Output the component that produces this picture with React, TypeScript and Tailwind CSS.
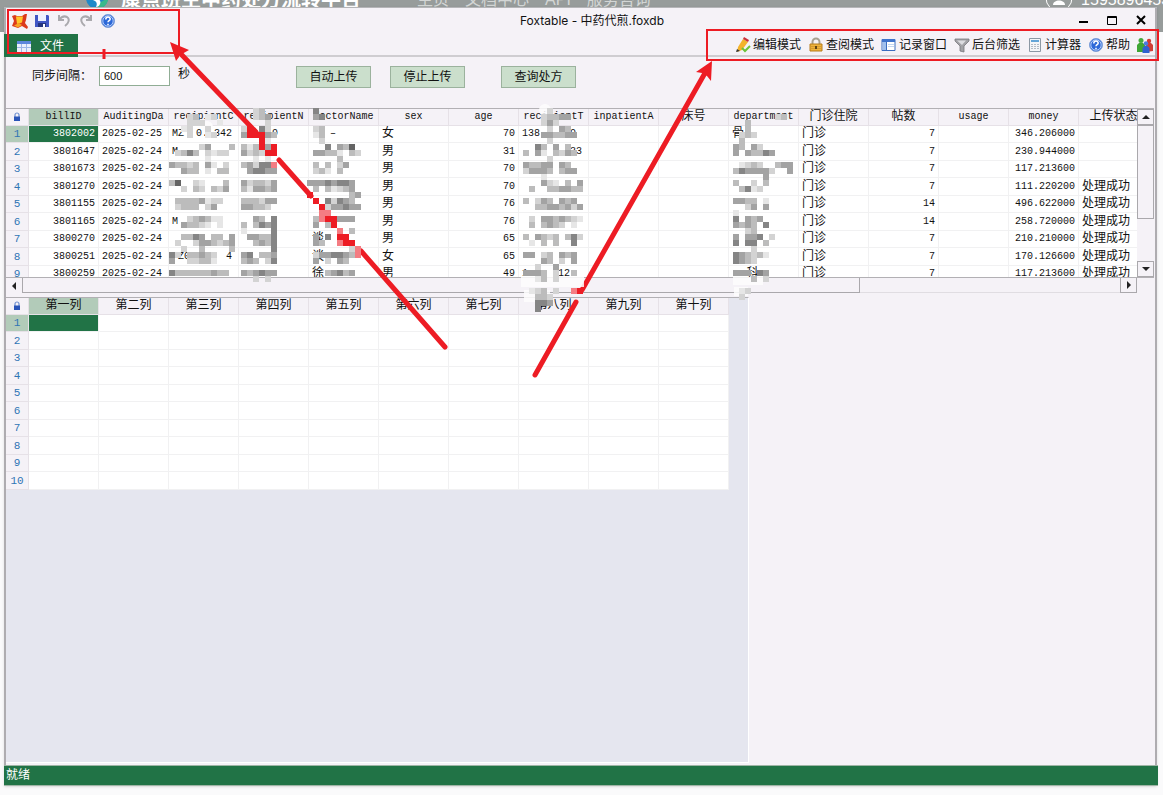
import { useState } from 'react';
import type { ReactNode } from 'react';

type Align = 'left' | 'right';

interface Column {
  key: string;
  title: string;
  align: Align;
}

const columns: Column[] = [
  { key: 'bill', title: 'billID', align: 'right' },
  { key: 'date', title: 'AuditingDa', align: 'left' },
  { key: 'code', title: 'recipientC', align: 'left' },
  { key: 'name', title: 'recipientN', align: 'left' },
  { key: 'doctor', title: 'doctorName', align: 'left' },
  { key: 'sex', title: 'sex', align: 'left' },
  { key: 'age', title: 'age', align: 'right' },
  { key: 'tel', title: 'recipientT', align: 'left' },
  { key: 'inpatient', title: 'inpatientA', align: 'left' },
  { key: 'bed', title: '床号', align: 'left' },
  { key: 'dept', title: 'department', align: 'left' },
  { key: 'kind', title: '门诊住院', align: 'left' },
  { key: 'doses', title: '帖数', align: 'right' },
  { key: 'usage', title: 'usage', align: 'right' },
  { key: 'money', title: 'money', align: 'right' },
  { key: 'status', title: '上传状态', align: 'left' },
];

const bills: Record<string, string>[] = [
  { bill: '3802002', date: '2025-02-25', code: 'MZ  0. 342', name: '     9', doctor: '   –', sex: '女', age: '70', tel: '138    60', dept: '骨', doses: '7', money: '346.206000' },
  { bill: '3801647', date: '2025-02-24', code: 'M', sex: '男', age: '31', tel: '        33', doses: '7', money: '230.944000' },
  { bill: '3801673', date: '2025-02-24', sex: '男', age: '70', doses: '7', money: '117.213600' },
  { bill: '3801270', date: '2025-02-24', sex: '男', age: '70', doses: '7', money: '111.220200', status: '处理成功' },
  { bill: '3801155', date: '2025-02-24', sex: '男', age: '76', doses: '14', money: '496.622000', status: '处理成功' },
  { bill: '3801165', date: '2025-02-24', code: 'M', sex: '男', age: '76', doses: '14', money: '258.720000', status: '处理成功' },
  { bill: '3800270', date: '2025-02-24', doctor: '谈', sex: '男', age: '65', doses: '7', money: '210.210000', status: '处理成功' },
  { bill: '3800251', date: '2025-02-24', code: ' Z0   0  4', doctor: '谈', sex: '女', age: '65', doses: '7', money: '170.126600', status: '处理成功' },
  { bill: '3800259', date: '2025-02-24', doctor: '徐', sex: '男', age: '49', tel: '1     12', dept: '  科', doses: '7', money: '117.213600', status: '处理成功' },
];

const blankTitles = ['第一列', '第二列', '第三列', '第四列', '第五列', '第六列', '第七列', '第八列', '第九列', '第十列'];

const CELL = 6;
const TOP = 108;

const shades: Record<string, string> = {
  '1': '#e6e6e6',
  '2': '#d3d3d3',
  '3': '#bcbcbc',
  '4': '#a3a3a3',
  '5': '#858585',
  '6': '#636363',
  r: '#ed1c24',
  p: '#f47c82',
};

// Each block: left edge, first row, then one string per 6px row
const blocks: { x: number; row: number; rows: string[] }[] = [
  {
    x: 169,
    row: 1,
    rows: [
      '...23.12', '...222..1', '..12..2', '...2..12', '', '.....24...3', '.2353.2122', '......1', '43323.41.2', '..433.1.33', '',
      '36..21...3', '..2.32.324', '', '.33334122', '.2333.24', '', '...234311', '..43321.1', '', '..3354.33.4', '.2..2443234',
      '..2..3....3', '52.33432', '4..22331', '', '5333333433',
    ],
  },
  {
    x: 241,
    row: 0,
    rows: [
      '..23', '..234', '....2', '2r.52', '4rrr43', '...r1', '313r4r', '4232rr', '..1.1', '34255p', '.45544', '', '423324', '314434', '',
      '333244', '44332', '', '..43.5', '3.3545', '1....5', '.44335', '..3435', '.....5', '45.334', '343.25', '', '434544', '..2.2',
    ],
  },
  {
    x: 307,
    row: 0,
    rows: [
      '.5', '.45', '', '.23', '.13', '..2', '...5.436', '.44331.32', '.....3', '.3.3.24', '.231.3', '', '44454554', '.3.31234',
      'r......34', '.r.52543', '..r244544', '..pp', '.3prr444', '.4.3r', '.....p.3', '.4.5.rr', '.43..prr', '.......2p', '.2445543p',
      '.4.2.43', '', '...34534',
    ],
  },
  {
    x: 523,
    row: 0,
    rows: [
      '....2', '...23344', '...242', '....2.43', '...443344', '....2', '..53.4.3', '3.41.3243', '....2', '43344.43', '24443.344', '...1',
      '...421.3.4', '.3..334433', '', '3.243.434', '..33443424', '', '.2.4434321', '.3.3432.1', '', '3.4323.352', '.1.3.3..5', '',
      '44.23.434', '...43.2.4', '..2..4', '4443.2..3', '..13.2', '', '.123.2..pr', '..332....', '..554', '..5',
    ],
  },
  {
    x: 733,
    row: 1,
    rows: [
      '.......23', '..3', '..3', '.232', '.3', '43.42', '4.43354', '', '.1232..344', '3544442..4', '.....4', '3..2.3', '.3512', '',
      '4433.1', '..24.4', '1', '5.434', '4343.5', '..23', '4.445.2', '5.55.3', '...2', '543231', '5432', '', '444.54', '...3.2', '',
      '.12', '.2',
    ],
  },
];

function Svg({ children }: { children: ReactNode }) {
  return (
    <svg className="h-4 w-4 shrink-0" viewBox="0 0 16 16" aria-hidden="true">
      {children}
    </svg>
  );
}

function FoxIcon() {
  return (
    <Svg>
      <path d="M0 3l3-1 2 1 5 0 3-2 2 0-1 6-1 3 3 4-1 2-5-3-4 2-6-2 2-5z" fill="#dc3a1c" />
      <path d="M4 3.500l7 0-1 6-5 1.500z" fill="#ffc62a" />
      <path d="M2 12.500l5-2.500 3 2-4 2.500z" fill="#f7a422" />
    </Svg>
  );
}

function SaveIcon() {
  return (
    <Svg>
      <path d="M1 2h13l1 1v11H1z" fill="#4257c4" />
      <path d="M4 2h8v6H4z" fill="#eef2ff" />
      <path d="M4 10h8v4H4z" fill="#26347e" />
      <path d="M9 11h2v3H9z" fill="#fff" />
    </Svg>
  );
}

function UndoIcon({ flip }: { flip?: boolean }) {
  return (
    <Svg>
      <g transform={flip ? 'translate(16 0) scale(-1 1)' : undefined} fill="none" stroke="#aaa9ad" strokeWidth="2">
        <path d="M3 2v5h5M3 7c3-4 6-4 8-3 3 2 2 6-2 9" />
      </g>
    </Svg>
  );
}

function HelpIcon() {
  return (
    <Svg>
      <circle cx="8" cy="8" r="6.500" fill="#2c68d8" stroke="#7f9fd8" />
      <circle cx="8" cy="8" r="5.200" fill="none" stroke="#d6e4ff" strokeWidth=".8" />
      <path d="M5.800 6.400c0-3 4.400-3 4.400-.3 0 1.600-2.200 1.600-2.200 3.200M8 10.700v1.500" fill="none" stroke="#fff" strokeWidth="1.500" />
    </Svg>
  );
}

function PencilIcon() {
  return (
    <Svg>
      <path d="M8 2l5 3-6 8-5 2 1-5z" fill="#f3b32c" />
      <path d="M8 2l1-2 5 3-1 2z" fill="#c9303c" />
      <path d="M1 15l1-3 3 2z" fill="#333" />
      <path d="M7 11l3 3 5-5" fill="none" stroke="#6cc33a" strokeWidth="2" />
    </Svg>
  );
}

function PadlockIcon() {
  return (
    <Svg>
      <path d="M4.500 8V5a3.500 3.500 0 0 1 7 0v3" fill="none" stroke="#a8a090" strokeWidth="2" />
      <path d="M2 7h12v7H2z" fill="#eeb33b" stroke="#b67d1c" />
      <path d="M3 9.500h10M3 11.500h10" stroke="#d59a30" />
      <path d="M7 9h2v3H7z" fill="#5f4313" />
    </Svg>
  );
}

function RecordIcon() {
  return (
    <Svg>
      <path d="M1 2.500h13v11H1z" fill="#fff" stroke="#3b6dbf" />
      <path d="M1 2h13v3H1z" fill="#3f74cc" />
      <path d="M2 5h3v8H2z" fill="#9fc0ee" />
      <path d="M5.500 5v8" stroke="#3b6dbf" />
      <path d="M7 7.500h6M7 9.500h6" stroke="#c3d6f2" />
    </Svg>
  );
}

function FunnelIcon() {
  return (
    <Svg>
      <path d="M1 2h14v2l-5 5v6l-4-1V9L1 4z" fill="#a2a2a6" stroke="#77777c" strokeWidth=".8" />
      <path d="M3 3.500h9L8 8z" fill="#dcdce0" />
    </Svg>
  );
}

function CalcIcon() {
  return (
    <Svg>
      <path d="M2.500 1.500h11v13h-11z" fill="#f4f6f8" stroke="#8c98a4" />
      <path d="M4 3h8v2H4z" fill="#64a6d8" />
      <path d="M4 7.500h8M4 9.500h8M4 11.500h8" stroke="#b3bcc6" strokeDasharray="2 1" />
    </Svg>
  );
}

function PeopleIcon() {
  return (
    <Svg>
      <circle cx="4" cy="3.500" r="2.500" fill="#46a83c" />
      <path d="M0 15V8l2-2h4l2 2v7z" fill="#3fa535" />
      <circle cx="12" cy="4" r="2.200" fill="#d23a32" />
      <path d="M9 15V8l2-2h3l2 2v6z" fill="#cf3f36" />
      <circle cx="9" cy="6.500" r="2.200" fill="#4a7be0" />
      <path d="M5.500 16v-5l2-2h3l2 2v5z" fill="#2f62d0" />
    </Svg>
  );
}

function TableIcon() {
  return (
    <Svg>
      <path d="M1 3h14v11H1z" fill="#e9effc" />
      <path d="M1 3h14v3H1z" fill="#5b86dc" />
      <path d="M1 9.500h14M5.500 6v8M10.500 6v8" stroke="#9cb6e8" />
    </Svg>
  );
}

function RowLock() {
  return (
    <svg className="mx-auto block h-[10px] w-2" viewBox="0 0 8 10" aria-hidden="true">
      <path d="M2 5V3a2 2 0 0 1 4 0v2" fill="none" stroke="#6f8fd0" strokeWidth="1.200" />
      <path d="M1 4.500h6V9H1z" fill="#2a54b8" />
    </svg>
  );
}

const menuItems = [
  { label: '编辑模式', icon: <PencilIcon /> },
  { label: '查阅模式', icon: <PadlockIcon /> },
  { label: '记录窗口', icon: <RecordIcon /> },
  { label: '后台筛选', icon: <FunnelIcon /> },
  { label: '计算器', icon: <CalcIcon /> },
  { label: '帮助', icon: <HelpIcon /> },
];

const isLatin = (text: string) => /^[\x20-\x7e–]*$/.test(text);

function GridHead({ titles }: { titles: string[] }) {
  return (
    <>
      <colgroup>
        <col className="w-[23px]" />
        {titles.map((t) => (
          <col key={t} className="w-[70px]" />
        ))}
      </colgroup>
      <thead>
        <tr className="h-[17px]">
          <th className="border-r border-b border-[#e6e1e7] bg-[#f5f2f7] p-0">
            <RowLock />
          </th>
          {titles.map((t, i) => (
            <th
              key={t}
              className={`overflow-hidden border-r border-b border-[#e6e1e7] p-0 text-center font-normal leading-4 ${
                i === 0 ? 'bg-[#b2cbb9]' : 'bg-[#f5f2f7]'
              } ${isLatin(t) ? 'text-[10px]' : 'text-xs'}`}
            >
              {t}
            </th>
          ))}
        </tr>
      </thead>
    </>
  );
}

function RowNumber({ n }: { n: number }) {
  return (
    <th
      className={`border-r border-b border-[#e6e1e7] p-0 text-center text-[11px] font-normal leading-4 text-[#2f75b5] ${
        n === 1 ? 'bg-[#b2cbb9]' : 'bg-[#f5f2f7]'
      }`}
    >
      {n}
    </th>
  );
}

function BillGrid() {
  return (
    <table className="w-[1143px] table-fixed border-separate border-spacing-0 whitespace-pre">
      <GridHead titles={columns.map((c) => c.title)} />
      <tbody>
        {bills.map((bill, r) => (
          <tr key={bill.bill} className="odd:h-[17px] even:h-[18px]">
            <RowNumber n={r + 1} />
            {columns.map((c, i) => {
              const text = c.key === 'kind' ? '门诊' : bill[c.key] ?? '';
              return (
                <td
                  key={c.key}
                  className={`overflow-hidden border-r border-b border-[#f1f1f2] px-[3px] py-0 leading-4 ${
                    c.align === 'right' ? 'text-right' : 'text-left'
                  } ${isLatin(text) ? 'text-[10px]' : 'text-xs'} ${r === 0 && i === 0 ? 'bg-[#217346] text-white' : 'bg-white'}`}
                >
                  {text}
                </td>
              );
            })}
          </tr>
        ))}
      </tbody>
    </table>
  );
}

function BlankGrid() {
  return (
    <table className="w-[723px] table-fixed border-separate border-spacing-0">
      <GridHead titles={blankTitles} />
      <tbody>
        {Array.from({ length: 10 }, (_, r) => (
          <tr key={r} className="odd:h-[17px] even:h-[18px]">
            <RowNumber n={r + 1} />
            {blankTitles.map((t, i) => (
              <td
                key={t}
                className={`border-r border-b border-[#f1f1f2] p-0 ${r === 0 && i === 0 ? 'bg-[#217346]' : 'bg-white'}`}
              />
            ))}
          </tr>
        ))}
      </tbody>
    </table>
  );
}

function ScrollArrow({ label, d, className }: { label: string; d: string; className: string }) {
  return (
    <button type="button" aria-label={label} className={`flex shrink-0 items-center justify-center border border-[#aaa8ac] ${className}`}>
      <svg className="h-2 w-2" viewBox="0 0 8 8" aria-hidden="true">
        <path d={d} fill="#222" />
      </svg>
    </button>
  );
}

function Markup() {
  return (
    <svg className="pointer-events-none absolute top-0 left-0" width="1163" height="795" viewBox="0 0 1163 795" aria-hidden="true">
      <g fill="none" stroke="#ed1c24">
        <path d="M8 10h171v43H8zM707 30h451v30H707z" strokeWidth="2" />
        <path d="M104 49v10" strokeWidth="3" />
        <g strokeWidth="5" strokeLinecap="round">
          <path d="M180 53L256 132M279 160L311 196M361 251L445 347" />
          <path d="M705 73L582 290M576 302L535 375" />
        </g>
      </g>
      <path d="M170 42l19 8-7 4-3 1 0 2-3 4zM712 61l-16 11 6 1 5 3 4 5z" fill="#ed1c24" />
      {/* Faded patches around the masked columns */}
      <g fill="#fdfdfd" opacity=".85">
        <circle cx="207" cy="127" r="6" />
        <circle cx="545" cy="110" r="6" />
        <path d="M521 277h63v10h-63zM524 290h26v12h-26zM733 277h30v8h-30zM734 287h14v9h-14z" />
      </g>
      <g shapeRendering="crispEdges">
        {blocks.map((b) =>
          b.rows.map((line, r) =>
            line.split('').map((c, i) =>
              shades[c] ? (
                <rect
                  key={`${b.x}-${r}-${i}`}
                  x={b.x + i * CELL}
                  y={TOP + (b.row + r) * CELL}
                  width={CELL}
                  height={CELL}
                  fill={shades[c]}
                />
              ) : null,
            ),
          ),
        )}
      </g>
    </svg>
  );
}

export default function App() {
  const [interval, setSyncInterval] = useState('600');

  return (
    <div className="relative flex h-screen min-h-[600px] flex-col overflow-hidden bg-[#fafafb] font-['Liberation_Sans','Noto_Sans_CJK_SC',sans-serif] text-xs text-[#111]">
      {/* Site header behind the window */}
      <div className="absolute inset-x-0 top-0 h-8 overflow-hidden bg-[#979c9b] text-white">
        <div className="-mt-[14px] flex h-7 items-center whitespace-nowrap">
          <svg className="ml-[85px] h-6 w-6" viewBox="0 0 24 24" aria-hidden="true">
            <circle cx="12" cy="10" r="11" fill="#2089c9" />
            <path d="M12 21a11 11 0 0 0 11-13c-3 6-9 4-11 13z" fill="#3ab88b" />
            <path d="M8 12c4-3 9 0 7 4-1 3-4 3-4 3 2-4 0-6-3-7z" fill="#fff" />
          </svg>
          <span className="ml-3 text-xl font-bold">康点班主中药处方流转平台</span>
          <nav className="ml-14 flex flex-1 gap-4 text-base text-[#d3d6d5]">
            <span>主页</span>
            <span>文档中心</span>
            <span>API</span>
            <span>服务咨询</span>
          </nav>
          <svg className="mr-2 h-7 w-7" viewBox="0 0 28 28" aria-hidden="true">
            <circle cx="14" cy="12" r="13" fill="none" stroke="#fff" />
            <path d="M8 19c0-6 12-6 12 0z" fill="#fff" />
          </svg>
          <span className="-mr-4 text-base">15958964535</span>
        </div>
      </div>

      <div className="relative mt-[7px] mr-[6px] mb-[9px] ml-1 flex min-h-0 flex-1 flex-col border-t border-[#b5b5b8] bg-[#f5f2f7] shadow-sm">
        <div className="flex min-h-0 flex-1 flex-col border-x-2 border-[#aeacb0]">
          {/* Title bar */}
          <header className="flex h-[26px] shrink-0 items-center">
            <div className="flex gap-[6px] pl-[6px]">
              <button type="button" aria-label="Foxtable"><FoxIcon /></button>
              <button type="button" aria-label="保存"><SaveIcon /></button>
              <button type="button" aria-label="撤销"><UndoIcon /></button>
              <button type="button" aria-label="重做"><UndoIcon flip /></button>
              <button type="button" aria-label="帮助"><HelpIcon /></button>
            </div>
            <h1 className="flex-1 text-center font-['Inter','Noto_Sans_CJK_SC',sans-serif] text-xs">Foxtable - 中药代煎.foxdb</h1>
            <div className="flex">
              <button type="button" aria-label="最小化" className="flex w-[29px] justify-center">
                <Svg><path d="M4 9h9" stroke="#000" strokeWidth="2" /></Svg>
              </button>
              <button type="button" aria-label="最大化" className="flex w-[29px] justify-center">
                <Svg><path d="M3.500 3.500h9v8h-9zM3 4.500h10" fill="none" stroke="#000" /></Svg>
              </button>
              <button type="button" aria-label="关闭" className="flex w-[29px] justify-center">
                <Svg><path d="M4 3l8 8M12 3l-8 8" stroke="#000" strokeWidth="2" /></Svg>
              </button>
            </div>
          </header>

          {/* Ribbon tabs */}
          <div className="flex h-[23px] shrink-0 items-stretch justify-between border-b-2 border-[#cfcdd1]">
            <button type="button" className="-mb-[2px] -ml-[2px] flex items-center gap-2 bg-[#217346] pr-[14px] pl-3 text-white">
              <TableIcon />
              文件
            </button>
            <div className="flex items-center gap-[7px] pr-[2px]">
              {menuItems.map((item) => (
                <button key={item.label} type="button" className="flex items-center gap-[2px] whitespace-nowrap">
                  {item.icon}
                  {item.label}
                </button>
              ))}
              <button type="button" aria-label="用户"><PeopleIcon /></button>
            </div>
          </div>

          {/* Sync controls */}
          <form className="flex h-[51px] shrink-0 items-start pt-[9px] pl-[26px]" onSubmit={(e) => e.preventDefault()}>
            <label htmlFor="interval" className="w-[67px] leading-5">同步间隔：</label>
            <input
              id="interval"
              className="h-5 w-[71px] border border-[#90ad95] bg-white px-1 text-[11px]"
              value={interval}
              onChange={(e) => setSyncInterval(e.target.value)}
            />
            <span className="ml-2 leading-4">秒</span>
            <div className="ml-[106px] flex gap-[19px]">
              <button type="button" className="h-[22px] w-[75px] border border-[#9bb29d] bg-[#cbdfcc] leading-5">自动上传</button>
              <button type="button" className="h-[22px] w-[75px] border border-[#9bb29d] bg-[#cbdfcc] leading-5">停止上传</button>
            </div>
            <button type="button" className="ml-9 h-[22px] w-[75px] border border-[#9bb29d] bg-[#cbdfcc] leading-5">查询处方</button>
          </form>

          <main className="flex min-h-0 flex-1 flex-col font-['Liberation_Mono','Noto_Sans_CJK_SC',monospace]">
            <section className="mr-px flex h-[170px] shrink-0 border-y border-[#b2b0b4]">
              <div className="min-w-0 flex-1 overflow-hidden bg-white">
                <BillGrid />
              </div>
              <div className="flex w-[17px] shrink-0 flex-col">
                <ScrollArrow label="向上" d="M4 2l4 4H0z" className="h-4 w-full" />
                <div className="h-[94px] border border-[#aaa8ac]" />
                <div className="flex-1" />
                <ScrollArrow label="向下" d="M4 6L0 2h8z" className="h-4 w-full" />
              </div>
            </section>
            <div className="mr-[18px] flex h-[15px] shrink-0">
              <ScrollArrow label="向左" d="M2 4l4-4v8z" className="w-[17px] border-y-0 border-l-0" />
              <div className="w-[74%] border-r border-b border-[#aaa8ac]" />
              <div className="flex-1 border-b border-[#e0dde2]" />
              <ScrollArrow label="向右" d="M6 4L2 0v8z" className="w-[17px] border-t-0" />
            </div>

            <section className="mt-1 mb-[2px] min-h-0 w-[743px] flex-1 overflow-hidden border-t border-r border-b border-[#b2b0b4] border-r-white border-b-white bg-[#e5e6ef]">
              <BlankGrid />
            </section>
          </main>
        </div>

        <footer className="-mr-px h-[21px] shrink-0 border-y border-[#9fb5a6] bg-[#217346] px-[2px] leading-[19px] text-white">就绪</footer>
      </div>

      <Markup />
    </div>
  );
}
